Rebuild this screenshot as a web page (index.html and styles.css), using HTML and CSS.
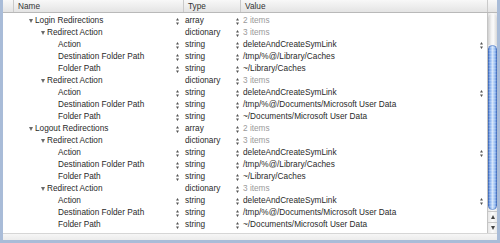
FILE: index.html
```html
<!DOCTYPE html>
<html>
<head>
<meta charset="utf-8">
<link rel="stylesheet" href="styles.css">
</head>
<body>
<div class="window">
  <div class="header">
    <div class="hcell hlead"></div>
    <div class="hcell">Name</div>
    <div class="hcell">Type</div>
    <div class="hcell">Value</div>
    <div class="hcell hcorner"></div>
  </div>
  <div class="body">
    <div class="rows">
      <div class="row"><div></div><div class="cname l0"><span class="tri"></span>Login Redirections<svg class="step" viewBox="0 0 3 7"><path d="M1.5 0L3 2.6H0Z M0 4.4H3L1.5 7Z"/></svg></div><div class="ctype">array<svg class="step" viewBox="0 0 3 7"><path d="M1.5 0L3 2.6H0Z M0 4.4H3L1.5 7Z"/></svg></div><div class="cval dim">2 items</div></div>
      <div class="row"><div></div><div class="cname l1"><span class="tri"></span>Redirect Action</div><div class="ctype">dictionary<svg class="step" viewBox="0 0 3 7"><path d="M1.5 0L3 2.6H0Z M0 4.4H3L1.5 7Z"/></svg></div><div class="cval dim">3 items</div></div>
      <div class="row"><div></div><div class="cname l2">Action<svg class="step" viewBox="0 0 3 7"><path d="M1.5 0L3 2.6H0Z M0 4.4H3L1.5 7Z"/></svg></div><div class="ctype">string<svg class="step" viewBox="0 0 3 7"><path d="M1.5 0L3 2.6H0Z M0 4.4H3L1.5 7Z"/></svg></div><div class="cval">deleteAndCreateSymLink<svg class="step" viewBox="0 0 3 7"><path d="M1.5 0L3 2.6H0Z M0 4.4H3L1.5 7Z"/></svg></div></div>
      <div class="row"><div></div><div class="cname l2">Destination Folder Path<svg class="step" viewBox="0 0 3 7"><path d="M1.5 0L3 2.6H0Z M0 4.4H3L1.5 7Z"/></svg></div><div class="ctype">string<svg class="step" viewBox="0 0 3 7"><path d="M1.5 0L3 2.6H0Z M0 4.4H3L1.5 7Z"/></svg></div><div class="cval">/tmp/%@/Library/Caches</div></div>
      <div class="row"><div></div><div class="cname l2">Folder Path<svg class="step" viewBox="0 0 3 7"><path d="M1.5 0L3 2.6H0Z M0 4.4H3L1.5 7Z"/></svg></div><div class="ctype">string<svg class="step" viewBox="0 0 3 7"><path d="M1.5 0L3 2.6H0Z M0 4.4H3L1.5 7Z"/></svg></div><div class="cval">~/Library/Caches</div></div>
      <div class="row"><div></div><div class="cname l1"><span class="tri"></span>Redirect Action</div><div class="ctype">dictionary<svg class="step" viewBox="0 0 3 7"><path d="M1.5 0L3 2.6H0Z M0 4.4H3L1.5 7Z"/></svg></div><div class="cval dim">3 items</div></div>
      <div class="row"><div></div><div class="cname l2">Action<svg class="step" viewBox="0 0 3 7"><path d="M1.5 0L3 2.6H0Z M0 4.4H3L1.5 7Z"/></svg></div><div class="ctype">string<svg class="step" viewBox="0 0 3 7"><path d="M1.5 0L3 2.6H0Z M0 4.4H3L1.5 7Z"/></svg></div><div class="cval">deleteAndCreateSymLink<svg class="step" viewBox="0 0 3 7"><path d="M1.5 0L3 2.6H0Z M0 4.4H3L1.5 7Z"/></svg></div></div>
      <div class="row"><div></div><div class="cname l2">Destination Folder Path<svg class="step" viewBox="0 0 3 7"><path d="M1.5 0L3 2.6H0Z M0 4.4H3L1.5 7Z"/></svg></div><div class="ctype">string<svg class="step" viewBox="0 0 3 7"><path d="M1.5 0L3 2.6H0Z M0 4.4H3L1.5 7Z"/></svg></div><div class="cval">/tmp/%@/Documents/Microsoft User Data</div></div>
      <div class="row"><div></div><div class="cname l2">Folder Path<svg class="step" viewBox="0 0 3 7"><path d="M1.5 0L3 2.6H0Z M0 4.4H3L1.5 7Z"/></svg></div><div class="ctype">string<svg class="step" viewBox="0 0 3 7"><path d="M1.5 0L3 2.6H0Z M0 4.4H3L1.5 7Z"/></svg></div><div class="cval">~/Documents/Microsoft User Data</div></div>
      <div class="row"><div></div><div class="cname l0"><span class="tri"></span>Logout Redirections<svg class="step" viewBox="0 0 3 7"><path d="M1.5 0L3 2.6H0Z M0 4.4H3L1.5 7Z"/></svg></div><div class="ctype">array<svg class="step" viewBox="0 0 3 7"><path d="M1.5 0L3 2.6H0Z M0 4.4H3L1.5 7Z"/></svg></div><div class="cval dim">2 items</div></div>
      <div class="row"><div></div><div class="cname l1"><span class="tri"></span>Redirect Action</div><div class="ctype">dictionary<svg class="step" viewBox="0 0 3 7"><path d="M1.5 0L3 2.6H0Z M0 4.4H3L1.5 7Z"/></svg></div><div class="cval dim">3 items</div></div>
      <div class="row"><div></div><div class="cname l2">Action<svg class="step" viewBox="0 0 3 7"><path d="M1.5 0L3 2.6H0Z M0 4.4H3L1.5 7Z"/></svg></div><div class="ctype">string<svg class="step" viewBox="0 0 3 7"><path d="M1.5 0L3 2.6H0Z M0 4.4H3L1.5 7Z"/></svg></div><div class="cval">deleteAndCreateSymLink<svg class="step" viewBox="0 0 3 7"><path d="M1.5 0L3 2.6H0Z M0 4.4H3L1.5 7Z"/></svg></div></div>
      <div class="row"><div></div><div class="cname l2">Destination Folder Path<svg class="step" viewBox="0 0 3 7"><path d="M1.5 0L3 2.6H0Z M0 4.4H3L1.5 7Z"/></svg></div><div class="ctype">string<svg class="step" viewBox="0 0 3 7"><path d="M1.5 0L3 2.6H0Z M0 4.4H3L1.5 7Z"/></svg></div><div class="cval">/tmp/%@/Library/Caches</div></div>
      <div class="row"><div></div><div class="cname l2">Folder Path<svg class="step" viewBox="0 0 3 7"><path d="M1.5 0L3 2.6H0Z M0 4.4H3L1.5 7Z"/></svg></div><div class="ctype">string<svg class="step" viewBox="0 0 3 7"><path d="M1.5 0L3 2.6H0Z M0 4.4H3L1.5 7Z"/></svg></div><div class="cval">~/Library/Caches</div></div>
      <div class="row"><div></div><div class="cname l1"><span class="tri"></span>Redirect Action</div><div class="ctype">dictionary<svg class="step" viewBox="0 0 3 7"><path d="M1.5 0L3 2.6H0Z M0 4.4H3L1.5 7Z"/></svg></div><div class="cval dim">3 items</div></div>
      <div class="row"><div></div><div class="cname l2">Action<svg class="step" viewBox="0 0 3 7"><path d="M1.5 0L3 2.6H0Z M0 4.4H3L1.5 7Z"/></svg></div><div class="ctype">string<svg class="step" viewBox="0 0 3 7"><path d="M1.5 0L3 2.6H0Z M0 4.4H3L1.5 7Z"/></svg></div><div class="cval">deleteAndCreateSymLink<svg class="step" viewBox="0 0 3 7"><path d="M1.5 0L3 2.6H0Z M0 4.4H3L1.5 7Z"/></svg></div></div>
      <div class="row"><div></div><div class="cname l2">Destination Folder Path<svg class="step" viewBox="0 0 3 7"><path d="M1.5 0L3 2.6H0Z M0 4.4H3L1.5 7Z"/></svg></div><div class="ctype">string<svg class="step" viewBox="0 0 3 7"><path d="M1.5 0L3 2.6H0Z M0 4.4H3L1.5 7Z"/></svg></div><div class="cval">/tmp/%@/Documents/Microsoft User Data</div></div>
      <div class="row"><div></div><div class="cname l2">Folder Path<svg class="step" viewBox="0 0 3 7"><path d="M1.5 0L3 2.6H0Z M0 4.4H3L1.5 7Z"/></svg></div><div class="ctype">string<svg class="step" viewBox="0 0 3 7"><path d="M1.5 0L3 2.6H0Z M0 4.4H3L1.5 7Z"/></svg></div><div class="cval">~/Documents/Microsoft User Data</div></div>
    </div>
    <div class="scrollbar">
      <div class="track">
        <div class="cap"></div>
        <div class="thumb"></div>
      </div>
      <div class="arrow up"><span></span></div>
      <div class="arrow down"><span></span></div>
    </div>
  </div>
  <div class="footer"></div>
</div>
</body>
</html>
```
FILE: styles.css
```css
html, body {
  margin: 0;
  padding: 0;
  background: #fff;
}
.window {
  width: 500px;
  height: 243px;
  box-sizing: border-box;
  border-left: 3px solid #a9bcd8;
  border-right: 3px solid #a9bcd8;
  border-bottom: 3px solid #a9bcd8;
  display: flex;
  flex-direction: column;
  font-family: "Liberation Sans", Arial, sans-serif;
  font-size: 8.25px;
  color: #2a2a2a;
  background: #fff;
  overflow: hidden;
}
.header {
  display: grid;
  grid-template-columns: 10px 170px 57px 247px 10px;
  height: 12px;
  flex: none;
  background: linear-gradient(#f8f8f8, #eeeeee 50%, #e4e4e4);
  border-bottom: 1px solid #b9b9b9;
}
.hcell {
  display: flex;
  align-items: center;
  padding-left: 4px;
  padding-top: 1px;
  color: #333;
  border-left: 1px solid #cacaca;
  box-sizing: border-box;
  line-height: 11px;
}
.hlead {
  border-left: none;
}
.hcorner {
  padding: 0;
}
.body {
  display: flex;
  flex: none;
  height: 220px;
}
.rows {
  flex: 1;
  padding-top: 2px;
}
.row {
  display: grid;
  grid-template-columns: 10px 170px 57px 247px;
  height: 12px;
  line-height: 12px;
}
.row > div {
  display: flex;
  align-items: center;
  white-space: nowrap;
  overflow: hidden;
}
.cname {
  padding-right: 4px;
}
.cname.l0 { padding-left: 16px; }
.cname.l1 { padding-left: 28px; }
.cname.l2 { padding-left: 45px; }
.ctype {
  padding-left: 2px;
  padding-right: 1px;
}
.cval {
  padding-left: 3px;
  padding-right: 4px;
}
.dim {
  color: #9a9a9a;
}
.tri {
  width: 0;
  height: 0;
  border-left: 2.5px solid transparent;
  border-right: 2.5px solid transparent;
  border-top: 4px solid #6a6a6a;
  margin-right: 2px;
  flex: none;
}
.step {
  margin-left: auto;
  width: 3px;
  height: 7px;
  flex: none;
  fill: #555;
}
.scrollbar {
  width: 10px;
  flex: none;
  display: flex;
  flex-direction: column;
  border-left: 1px solid #c4c4c4;
  box-sizing: border-box;
  background: linear-gradient(to right, #e4e4e4, #f8f8f8 40%, #f8f8f8 60%, #e8e8e8);
}
.track {
  flex: 1;
  display: flex;
  flex-direction: column;
  padding-bottom: 1px;
}
.cap {
  height: 31px;
  margin-top: 1px;
  border-radius: 5px 5px 0 0;
  background: linear-gradient(to right, #cfcfcf, #f4f4f4 40%, #fafafa 60%, #d8d8d8);
  flex: none;
}
.thumb {
  flex: 1;
  border-radius: 5px;
  background:
    repeating-linear-gradient(transparent 0 2px, rgba(255,255,255,0.18) 2px 3px),
    linear-gradient(to right, #4a78cc, #8db3ee 25%, #d2e4fb 50%, #9cc0f2 75%, #4d7bcf);
  box-shadow: inset 0 0 0 1px rgba(40, 80, 160, 0.4);
}
.arrow {
  height: 10px;
  flex: none;
  display: flex;
  align-items: center;
  justify-content: center;
  background: linear-gradient(to right, #e6e6e6, #fbfbfb 50%, #e9e9e9);
  border-top: 1px solid #c8c8c8;
}
.arrow span {
  width: 0;
  height: 0;
  border-left: 2.5px solid transparent;
  border-right: 2.5px solid transparent;
}
.arrow.up span {
  border-bottom: 4px solid #444;
}
.arrow.down span {
  border-top: 4px solid #444;
}
.footer {
  flex: 1;
  border-top: 1px solid #d6d6d6;
  background: linear-gradient(#f6f6f6, #ececec);
}
```
